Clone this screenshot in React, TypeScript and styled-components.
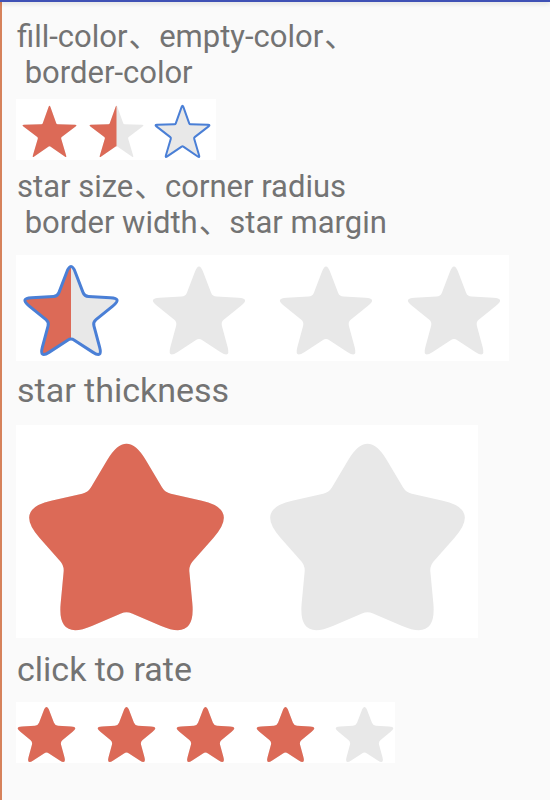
import React, { useId } from "react";
import styled, { createGlobalStyle } from "styled-components";

const GlobalStyle = createGlobalStyle`
  html, body { margin: 0; padding: 0; background: #fafafa; }
  body { font-family: Roboto, "Noto Sans CJK SC", sans-serif; }
`;

const TopBar = styled.div`
  position: relative;
  z-index: 1;
  height: 2px;
  background: #3f51b5;
  box-shadow: 0 1px 5px rgba(0, 0, 0, 0.22);
`;

const Page = styled.main`
  min-height: calc(100vh - 2px);
  box-sizing: border-box;
  border-left: 2px solid #d6825b;
  padding: 0 0 0 14px;
  display: flex;
  flex-direction: column;
  align-items: flex-start;
`;

const Title = styled.div<{ $size: number; $lh: number; $mt: number }>`
  margin-top: ${(p) => p.$mt}px;
  font-size: ${(p) => p.$size}px;
  line-height: ${(p) => p.$lh}px;
  color: #737373;
  white-space: pre;
  padding-left: 1px;
`;

const Comma = styled.span`
  margin-left: 1px;
  letter-spacing: -8px;
`;

const StarBox = styled.div<{ $gap: number; $mt: number; $height: number }>`
  display: flex;
  gap: ${(p) => p.$gap}px;
  margin-top: ${(p) => p.$mt}px;
  height: ${(p) => p.$height}px;
  background: #ffffff;
`;

const StarSvg = styled.svg`
  display: block;
  flex: none;
  overflow: visible;
`;

const RED = "#dc6a57";
const EMPTY = "#e8e8e8";
const BLUE = "#4a7fd6";

type Pt = [number, number];

function starPath(cx: number, cy: number, R: number, r: number, dOut: number, dIn: number): string {
  const pts: Pt[] = [];
  for (let i = 0; i < 10; i++) {
    const a = -Math.PI / 2 + (i * Math.PI) / 5;
    const rad = i % 2 === 0 ? R : r;
    pts.push([cx + rad * Math.cos(a), cy + rad * Math.sin(a)]);
  }
  const f = (n: number) => n.toFixed(2);
  let d = "";
  for (let i = 0; i < 10; i++) {
    const p = pts[i];
    const prev = pts[(i + 9) % 10];
    const next = pts[(i + 1) % 10];
    const len = Math.hypot(next[0] - p[0], next[1] - p[1]);
    const rr = Math.min(i % 2 === 0 ? dOut : dIn, len / 2);
    const t = rr / len;
    const a: Pt = [p[0] + (prev[0] - p[0]) * t, p[1] + (prev[1] - p[1]) * t];
    const b: Pt = [p[0] + (next[0] - p[0]) * t, p[1] + (next[1] - p[1]) * t];
    d += `${i === 0 ? "M" : "L"}${f(a[0])},${f(a[1])} Q${f(p[0])},${f(p[1])} ${f(b[0])},${f(b[1])} `;
  }
  return d + "Z";
}

type Shape = { w: number; h: number; cx: number; cy: number; R: number; r: number; dOut: number; dIn: number };

function Star({ shape, fill, border = 0 }: { shape: Shape; fill: number; border?: number }) {
  const id = useId().replace(/:/g, "");
  const d = starPath(shape.cx, shape.cy, shape.R, shape.r, shape.dOut, shape.dIn);
  const splitX = shape.cx - shape.R + 2 * shape.R * fill;
  return (
    <StarSvg width={shape.w} height={shape.h} viewBox={`0 0 ${shape.w} ${shape.h}`}>
      <defs>
        <clipPath id={`c${id}`}>
          <rect x={-10} y={-10} width={Math.max(0, splitX + 10)} height={shape.h + 20} />
        </clipPath>
      </defs>
      <path d={d} fill={EMPTY} />
      {fill > 0 && <path d={d} fill={RED} clipPath={`url(#c${id})`} />}
      {border > 0 && <path d={d} fill="none" stroke={BLUE} strokeWidth={border} strokeLinejoin="round" />}
    </StarSvg>
  );
}

const S1: Shape = { w: 66.5, h: 61, cx: 33.5, cy: 35, R: 29.5, r: 12, dOut: 2.5, dIn: 1 };
const S2: Shape = { w: 110, h: 106, cx: 55, cy: 60, R: 54, r: 23, dOut: 12, dIn: 4 };
const S3: Shape = { w: 221, h: 213, cx: 110.5, cy: 120.5, R: 118, r: 65.5, dOut: 38, dIn: 6 };
const S4: Shape = { w: 61, h: 61, cx: 30.5, cy: 35.3, R: 34, r: 14.5, dOut: 8, dIn: 3 };

export default function App() {
  return (
    <>
      <GlobalStyle />
      <TopBar />
      <Page>
        <Title $size={31} $lh={36} $mt={17}>
          fill-color<Comma>、</Comma> empty-color<Comma>、</Comma>
          {"\n border-color"}
        </Title>
        <StarBox $gap={0} $mt={8} $height={61}>
          <Star shape={S1} fill={1} />
          <Star shape={S1} fill={0.5} />
          <Star shape={S1} fill={0} border={2} />
        </StarBox>

        <Title $size={31} $lh={36} $mt={9}>
          star size<Comma>、</Comma> corner radius
          {"\n border width"}<Comma>、</Comma> star margin
        </Title>
        <StarBox $gap={17.5} $mt={14} $height={106}>
          <Star shape={S2} fill={0.5} border={3} />
          <Star shape={S2} fill={0} />
          <Star shape={S2} fill={0} />
          <Star shape={S2} fill={0} />
        </StarBox>

        <Title $size={34} $lh={40} $mt={9}>star thickness</Title>
        <StarBox $gap={20} $mt={15} $height={213}>
          <Star shape={S3} fill={1} />
          <Star shape={S3} fill={0} />
        </StarBox>

        <Title $size={34} $lh={40} $mt={11}>click to rate</Title>
        <StarBox $gap={18.5} $mt={13} $height={61}>
          <Star shape={S4} fill={1} />
          <Star shape={S4} fill={1} />
          <Star shape={S4} fill={1} />
          <Star shape={S4} fill={1} />
          <Star shape={S4} fill={0} />
        </StarBox>
      </Page>
    </>
  );
}
